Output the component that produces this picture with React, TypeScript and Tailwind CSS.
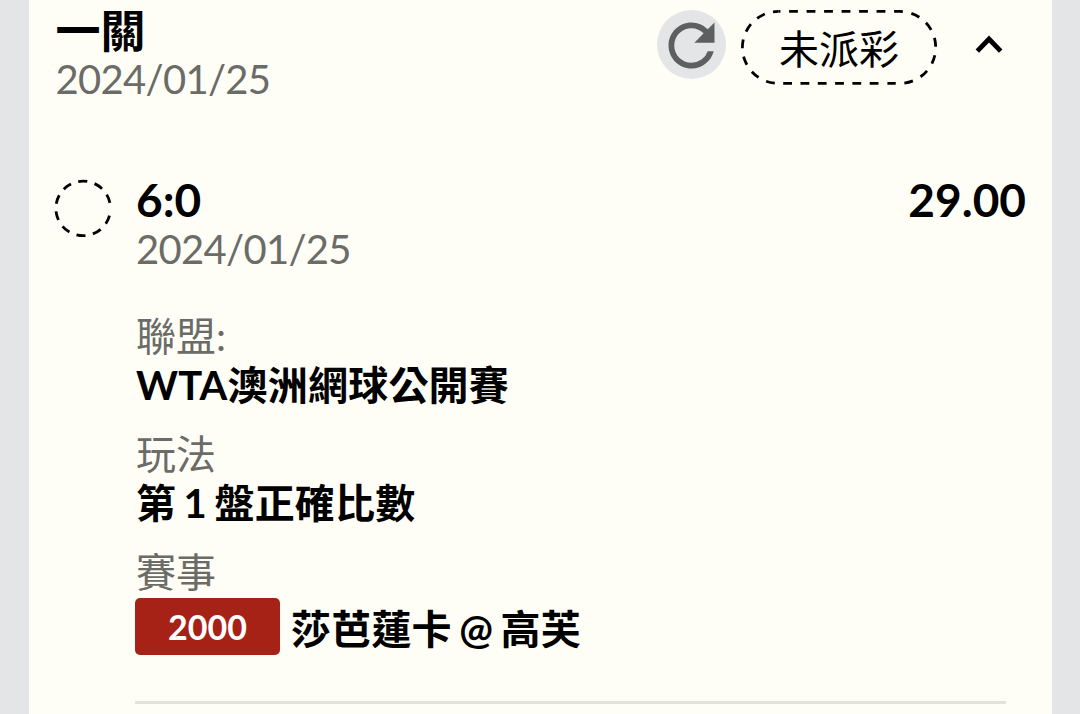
import { clsx } from "clsx"
import { MdRefresh } from "react-icons/md"

const details = [
  { label: "聯盟:", value: "WTA澳洲網球公開賽" },
  { label: "玩法", value: "第 1 盤正確比數" },
]

function RefreshButton() {
  return (
    <button className="w-[69px] h-[69px] pt-px rounded-full bg-[#e4e5e7] text-[#5e5f61]" aria-label="refresh">
      <MdRefresh className="w-[69px] h-[69px]" />
    </button>
  )
}

function StatusPill({ text }: { text: string }) {
  return (
    <div className="relative w-[196px] h-[75px] flex items-center justify-center">
      <svg className="absolute inset-0 w-full h-full" viewBox="0 0 196 75" fill="none" stroke="#000" strokeWidth="2.8">
        <path
          d="M37.4 1.4H158.7A36 36 0 0 1 158.7 73.4H146.4"
          strokeDasharray="8.8 8.7"
          strokeDashoffset="6.8"
        />
        <path d="M137.5 73.4H37.4A36 36 0 0 1 37.4 1.4" strokeDasharray="8.8 8.5" />
      </svg>
      <span className="relative top-px text-[40px] leading-[48px]">{text}</span>
    </div>
  )
}

function DateText({ value }: { value: string }) {
  return <div className="text-[40px] leading-[48px] tracking-[-0.7px] text-[#6b6b68]">{value}</div>
}

function Detail({ label, value, className }: { label: string; value: string; className?: string }) {
  return (
    <div className={clsx("text-[40px]", className)}>
      <div className="h-[49px] leading-[48px] text-[#6b6b68]">{label}</div>
      <div className="h-[48px] leading-[48px] font-bold tracking-[0.2px] [word-spacing:-2.5px]">{value}</div>
    </div>
  )
}

export default function App() {
  return (
    <div
      lang="zh-Hant"
      className="w-[1080px] h-[714px] overflow-hidden bg-[#e4e5e7] pl-[29px] pr-[28px] font-['Lato','Noto_Sans_CJK_TC',sans-serif] text-black whitespace-nowrap"
    >
      <div className="h-full bg-[#fefef6]">
        <header className="h-[174px] pl-[26.5px] flex justify-between">
          <div className="pt-[6px]">
            <h1 className="h-[49px] text-[45px] leading-[50px] font-bold">一關</h1>
            <DateText value="2024/01/25" />
          </div>
          <div className="flex items-start pt-[10px] pr-[48px]">
            <RefreshButton />
            <div className="ml-[15px]">
              <StatusPill text="未派彩" />
            </div>
            <svg className="ml-[38px] mt-[24px] w-[29px] h-[22px]" viewBox="0 0 29 22" fill="none">
              <path d="M2.3 17.2L14 5L25.7 17.2" stroke="#000" strokeWidth="4.8" />
            </svg>
          </div>
        </header>

        <main className="flex">
          <div className="w-[107px] pl-[25px] pt-[5px] shrink-0">
            <svg className="w-[59px] h-[59px]" viewBox="0 0 59 59" fill="none">
              <path
                d="M55.5 36.6A27.3 27.3 0 1 1 55.9 23.9"
                stroke="#000"
                strokeWidth="2.8"
                strokeDasharray="9 7.6"
              />
            </svg>
          </div>
          <div className="flex-1 pt-px">
            <div className="flex justify-between pr-[26px] h-[50px] text-[46px] leading-[50px] font-bold">
              <span>6:0</span>
              <span>29.00</span>
            </div>
            <DateText value="2024/01/25" />

            <div className="mt-[39px] flex flex-col gap-[21px]">
              {details.map((item) => (
                <Detail key={item.label} label={item.label} value={item.value} />
              ))}
            </div>

            <div className="mt-[21px] h-[50px] text-[40px] leading-[48px] text-[#6b6b68]">賽事</div>
            <div className="flex items-center -ml-px">
              <span className="w-[145px] h-[57px] rounded-[5px] bg-[#a62116] text-white text-[34px] leading-[57px] font-bold text-center">
                2000
              </span>
              <span className="relative top-[2px] ml-[11px] text-[40px] leading-[48px] font-bold tracking-[0.2px] [word-spacing:-2.5px]">
                莎芭蓮卡 @ 高芙
              </span>
            </div>
            <div className="-ml-px mt-[46px] w-[871px] h-[3px] bg-[#e3e3dc]" />
          </div>
        </main>
      </div>
    </div>
  )
}
